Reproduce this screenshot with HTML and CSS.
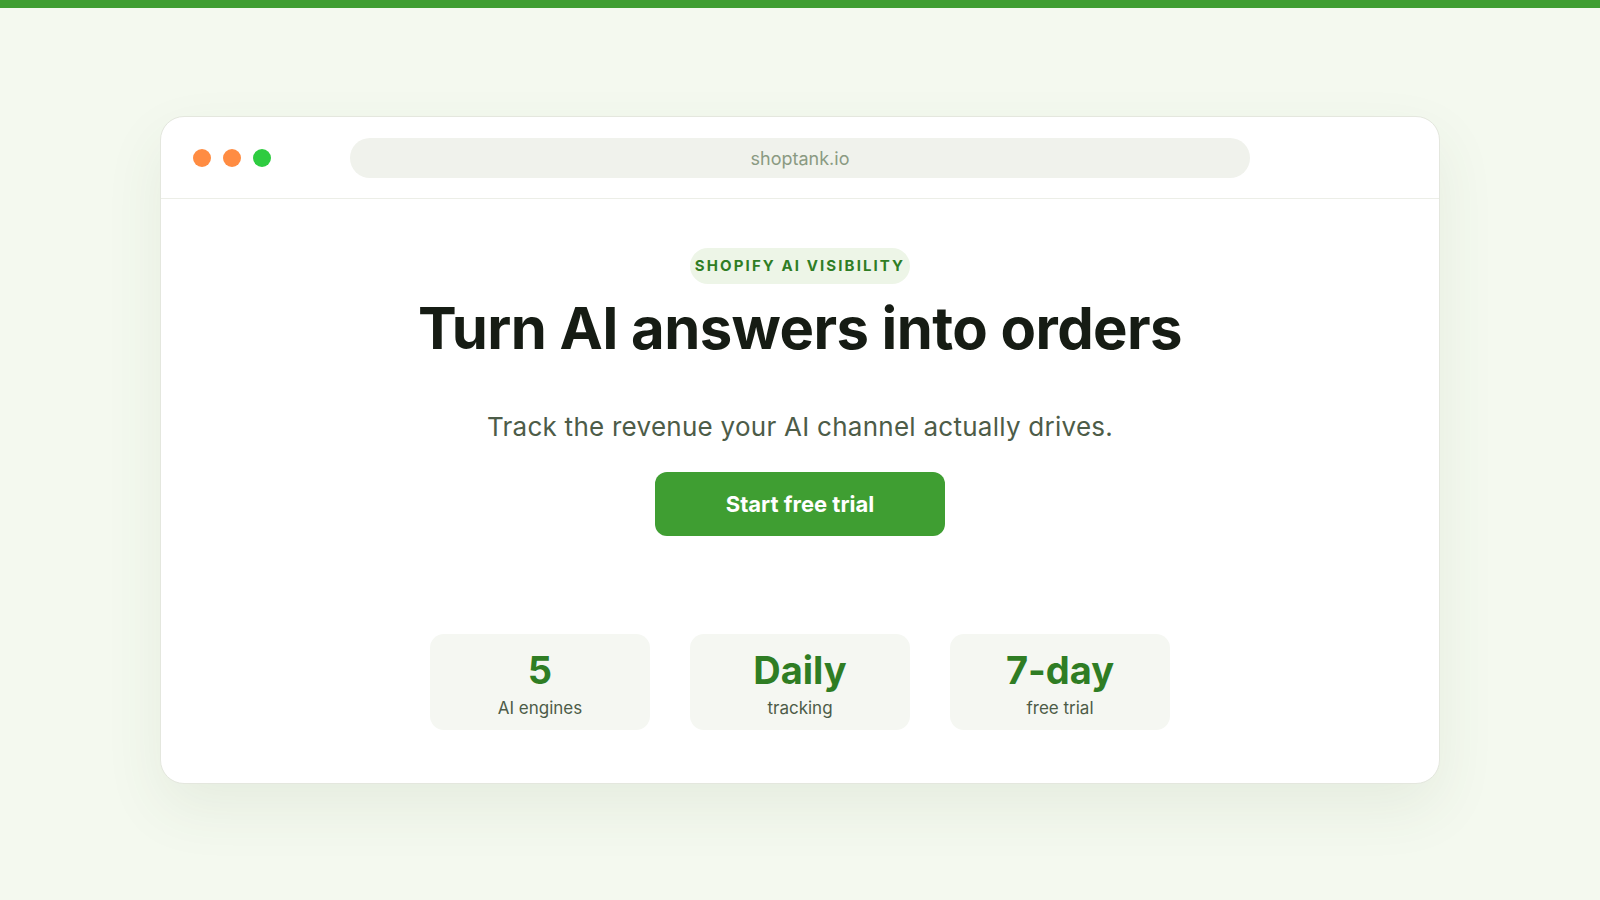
FILE: index.html
```html
<!DOCTYPE html>
<html lang="en">
<head>
    <meta charset="UTF-8">
    <meta name="viewport" content="width=device-width, initial-scale=1.0">
    <title>Shoptank - Turn AI answers into orders</title>
    <link rel="stylesheet" href="styles.css">
</head>
<body>
    <div class="top-bar"></div>

    <main class="stage">
        <div class="window">
            <div class="window-header">
                <div class="dots">
                    <span class="dot dot-orange"></span>
                    <span class="dot dot-orange"></span>
                    <span class="dot dot-green"></span>
                </div>
                <div class="url-bar">shoptank.io</div>
            </div>

            <div class="window-body">
                <span class="badge">SHOPIFY AI VISIBILITY</span>
                <h1>Turn AI answers into orders</h1>
                <p class="subtitle">Track the revenue your AI channel actually drives.</p>
                <button class="cta">Start free trial</button>

                <div class="stats">
                    <div class="stat">
                        <div class="stat-value">5</div>
                        <div class="stat-label">AI engines</div>
                    </div>
                    <div class="stat">
                        <div class="stat-value">Daily</div>
                        <div class="stat-label">tracking</div>
                    </div>
                    <div class="stat">
                        <div class="stat-value">7-day</div>
                        <div class="stat-label">free trial</div>
                    </div>
                </div>
            </div>
        </div>
    </main>
</body>
</html>
```

FILE: styles.css
```css
/* Basic reset */
* {
    box-sizing: border-box;
    margin: 0;
    padding: 0;
    font-family: Inter, "DejaVu Sans", sans-serif;
}

body {
    min-height: 100vh;
    background-color: #f4f9ef;
    color: #161c14;
}

.top-bar {
    height: 8px;
    background-color: #3f9e32;
}

.stage {
    display: flex;
    justify-content: center;
    padding-top: 108px;
}

.window {
    width: 1280px;
    background-color: #fff;
    border: 1px solid #e4e7de;
    border-radius: 24px;
    box-shadow: 0 24px 60px rgba(70, 90, 50, 0.08);
    overflow: hidden;
}

.window-header {
    display: grid;
    grid-template-columns: 1fr 900px 1fr;
    align-items: center;
    height: 82px;
    padding: 0 32px;
    border-bottom: 1px solid #eceee7;
}

.dots {
    display: flex;
    gap: 12px;
}

.dot {
    width: 18px;
    height: 18px;
    border-radius: 50%;
}

.dot-orange {
    background-color: #ff8c42;
}

.dot-green {
    background-color: #2ecc40;
}

.url-bar {
    height: 40px;
    line-height: 41px;
    border-radius: 20px;
    background-color: #f0f2ec;
    color: #8a9a82;
    font-size: 18px;
    text-align: center;
}

.window-body {
    display: flex;
    flex-direction: column;
    align-items: center;
    padding: 49px 0 53px;
    text-align: center;
}

.badge {
    display: inline-block;
    height: 36px;
    line-height: 36px;
    padding: 0 5px;
    border-radius: 18px;
    background-color: #edf5e7;
    color: #2f7d24;
    font-size: 15px;
    font-weight: 700;
    letter-spacing: 2.1px;
}

h1 {
    margin-top: 10px;
    font-size: 58px;
    font-weight: 700;
    line-height: 1.2;
    letter-spacing: -0.01em;
    color: #161c14;
}

.subtitle {
    margin-top: 47px;
    font-size: 26px;
    letter-spacing: 0.01em;
    color: #4d5c48;
}

.cta {
    margin-top: 30px;
    width: 290px;
    height: 64px;
    border: none;
    border-radius: 12px;
    background-color: #3f9e32;
    color: #fff;
    font-size: 22px;
    font-weight: 700;
    cursor: pointer;
}

.stats {
    display: flex;
    gap: 40px;
    margin-top: 98px;
}

.stat {
    width: 220px;
    height: 96px;
    padding-top: 16px;
    border-radius: 14px;
    background-color: #f5f7f2;
}

.stat-value {
    font-size: 38px;
    font-weight: 700;
    line-height: 1.1;
    color: #2f7d24;
}

.stat-label {
    margin-top: 7px;
    font-size: 17px;
    color: #4d5c48;
}
```
